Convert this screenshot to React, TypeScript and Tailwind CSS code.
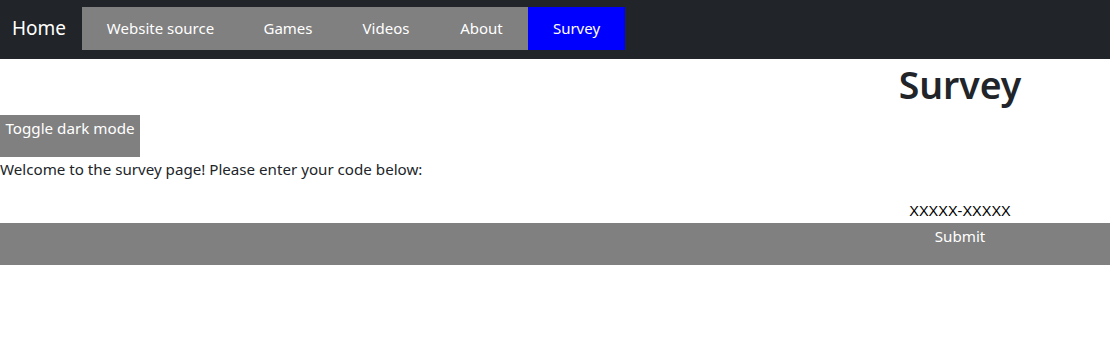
import React from "react";

export default function App() {
  const links = [
    { label: "Website source", w: "w-[157px]" },
    { label: "Games", w: "w-[98px]" },
    { label: "Videos", w: "w-[98px]" },
    { label: "About", w: "w-[93px]" },
  ];
  return (
    <div className="w-[1110px] h-[353px] bg-white text-[#212529] font-['Noto_Sans',sans-serif]">
      <nav className="h-[59px] bg-[#212529] flex items-start pt-[7px]">
        <div className="w-[82px] h-[43px] flex items-center pl-[12px] text-white text-[19px]">
          Home
        </div>
        <div className="flex h-[43px] bg-[#808080]">
          {links.map((l) => (
            <div
              key={l.label}
              className={`${l.w} h-[43px] flex items-center justify-center text-white text-[15px]`}
            >
              {l.label}
            </div>
          ))}
        </div>
        <div className="w-[97px] h-[43px] bg-[#0000ff] flex items-center justify-center text-white text-[15px]">
          Survey
        </div>
      </nav>
      <div className="h-[56px] flex justify-end">
        <h1 className="w-[300px] text-center text-[37.4px] leading-[46px] font-semibold pt-[3px] text-[#212529]">
          Survey
        </h1>
      </div>
      <button className="block w-[140px] h-[42px] bg-[#808080] text-white text-[15.2px] leading-[24px] text-center">
        <span className="block -mt-[16px]">Toggle dark mode</span>
      </button>
      <p className="h-[24px] leading-[24px] text-[15.15px] text-[#212529]">
        Welcome to the survey page! Please enter your code below:
      </p>
      <div className="h-[42px] flex justify-end items-end">
        <div className="w-[300px] text-center text-[14.5px] leading-[24px] pb-[0px] text-black font-['Liberation_Sans',Arial,sans-serif]">
          XXXXX-XXXXX
        </div>
      </div>
      <button className="block w-full h-[42px] bg-[#808080] text-white text-[15.2px] leading-[24px]">
        <div className="flex justify-end -mt-[16px]">
          <span className="w-[300px] text-center">Submit</span>
        </div>
      </button>
    </div>
  );
}
